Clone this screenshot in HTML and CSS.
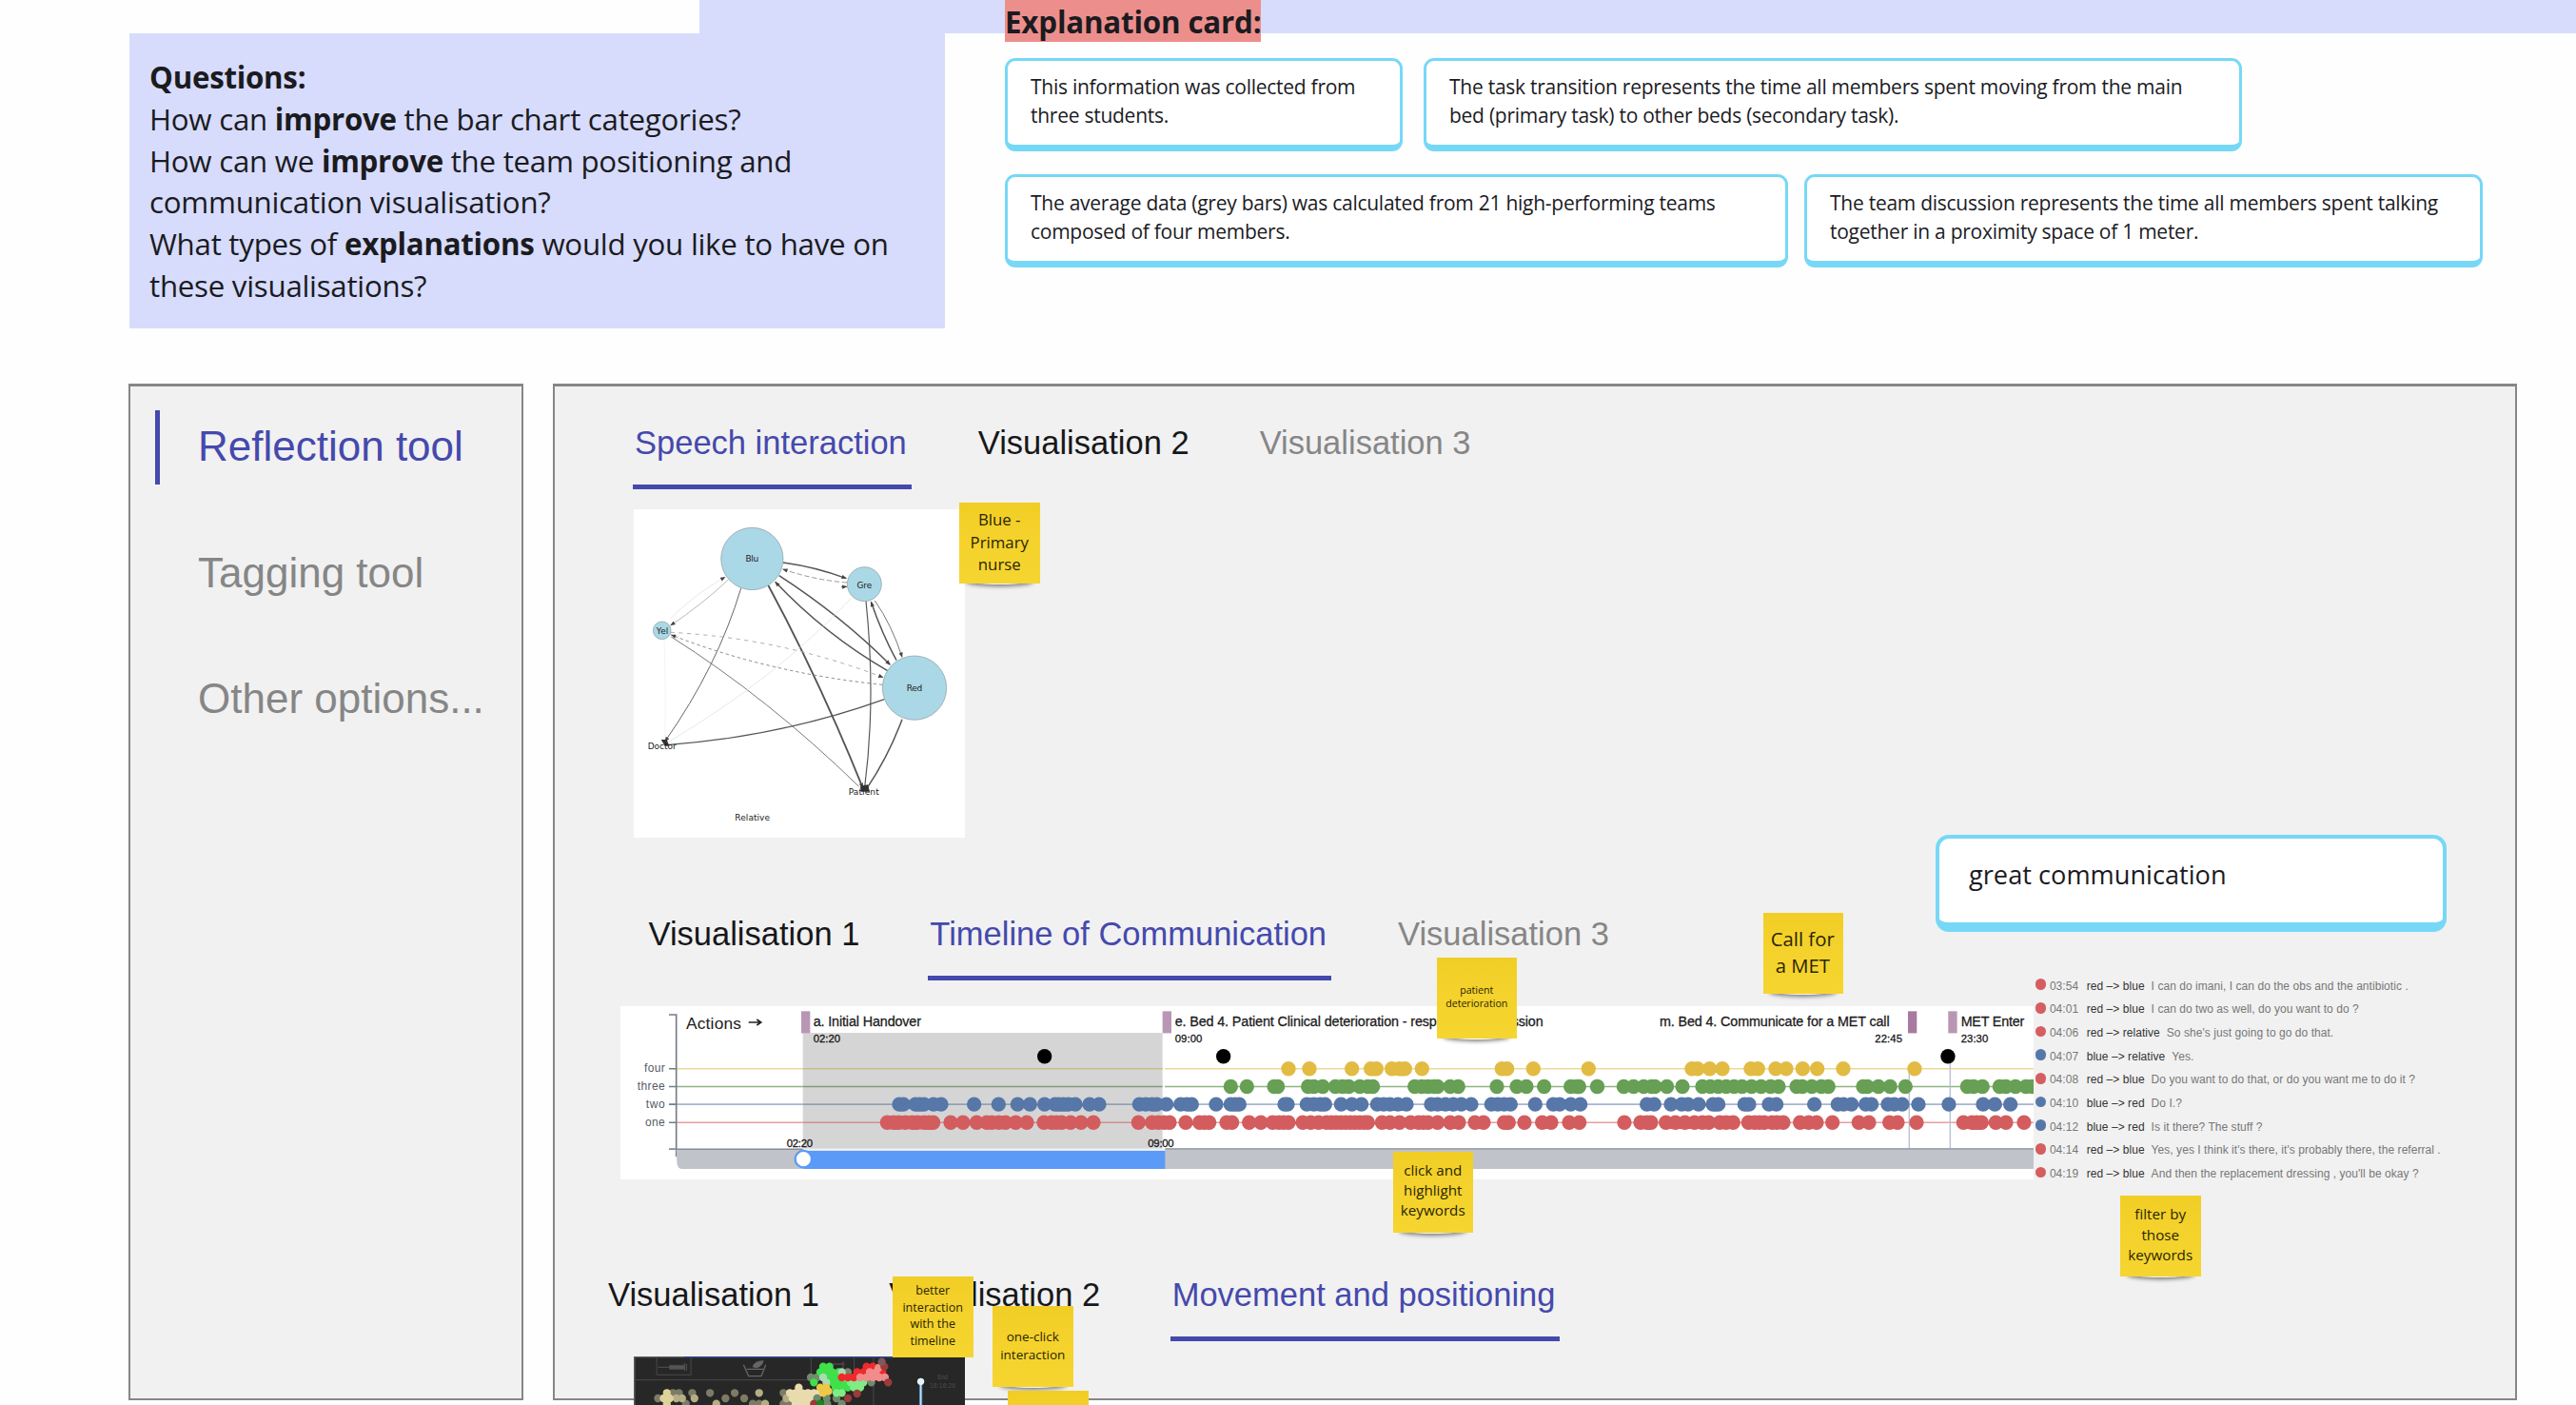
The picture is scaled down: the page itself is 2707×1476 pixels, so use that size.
FILE: index.html
```html
<!DOCTYPE html>
<html lang="en">
<head>
<meta charset="utf-8">
<title>Reflection tool board</title>
<link rel="stylesheet" href="styles.css">
</head>
<body>
<div class="board">
  <div class="banner"></div>
  <header class="top">
    <section class="questions">
      <p><b>Questions:</b></p>
      <p>How can <b>improve</b> the bar chart categories?</p>
      <p>How can we <b>improve</b> the team positioning and<br>communication visualisation?</p>
      <p>What types of <b>explanations</b> would you like to have on<br>these visualisations?</p>
    </section>
    <section class="explain">
      <h2 class="explain-title">Explanation card:</h2>
      <div class="cards">
        <div class="card card-a">This information was collected from<br>three students.</div>
        <div class="card card-b">The task transition represents the time all members spent moving from the main<br>bed (primary task) to other beds (secondary task).</div>
      </div>
      <div class="cards">
        <div class="card card-c">The average data (grey bars) was calculated from 21 high-performing teams<br>composed of four members.</div>
        <div class="card card-d">The team discussion represents the time all members spent talking<br>together in a proximity space of 1 meter.</div>
      </div>
    </section>
  </header>

  <div class="panels">
    <nav class="side">
      <a class="side-item active">Reflection tool</a>
      <a class="side-item">Tagging tool</a>
      <a class="side-item">Other options...</a>
    </nav>

    <main class="main">
      <div class="tabs tabs-1">
        <a class="tab on">Speech interaction</a><a class="tab">Visualisation 2</a><a class="tab off">Visualisation 3</a>
      </div>
      <svg class="network" viewBox="76 44 1046 1036">
        <defs>
          <marker id="arrow" viewBox="0 0 10 8" refX="9" refY="4" markerWidth="18" markerHeight="13" markerUnits="userSpaceOnUse" orient="auto"><path d="M0 0L10 4L0 8z" fill="#444"/></marker>
        </defs>
        <rect x="76" y="44" width="1046" height="1036" fill="#fff"/>
        <g fill="none" stroke="#555" stroke-width="3">
          <path d="M547 212Q650 226 746 262" stroke-width="4" marker-end="url(#arrow)"/>
          <path d="M748 275Q650 268 546 233" stroke="#999" stroke-dasharray="16 8" marker-end="url(#arrow)"/>
          <path d="M730 289L748 288" marker-end="url(#arrow)"/>
          <path d="M534 253Q730 380 884 534" stroke-width="4.5" marker-end="url(#arrow)"/>
          <path d="M876 553Q680 440 522 273" stroke-width="4.5" marker-end="url(#arrow)"/>
          <path d="M500 284Q660 580 798 922" stroke-width="5.5" marker-end="url(#arrow)"/>
          <path d="M414 293Q340 540 174 776" stroke="#666" marker-end="url(#arrow)"/>
          <path d="M192 388Q270 310 364 258" stroke="#ddd" stroke-width="2" marker-end="url(#arrow)"/>
          <path d="M374 266Q290 345 192 410" stroke="#aaa" stroke-width="2.5" marker-end="url(#arrow)"/>
          <path d="M192 432Q540 450 862 574" stroke="#aaa" stroke-dasharray="12 14" marker-end="url(#arrow)"/>
          <path d="M860 597Q500 560 194 440" stroke="#888" stroke-dasharray="10 9" marker-end="url(#arrow)"/>
          <path d="M194 446Q500 640 786 918" stroke="#777"/>
          <path d="M172 456Q178 620 174 770" stroke="#eee" stroke-width="2"/>
          <path d="M762 324Q520 580 184 778" stroke="#ddd" stroke-width="2"/>
          <path d="M866 643Q540 760 180 787" stroke-width="3.5"/>
          <path d="M836 332Q890 410 922 510" stroke="#777" marker-end="url(#arrow)"/>
          <path d="M904 520Q860 440 824 336" stroke-width="4.5" marker-end="url(#arrow)"/>
          <path d="M808 334Q840 640 804 920" stroke-width="3.5"/>
          <path d="M922 706Q880 820 812 922" stroke-width="4.5"/>
        </g>
        <path d="M162 770l18 0l8 20h-14zM790 916l24-4l6 22h-28z" fill="#333"/>
        <g fill="#abd8e6" stroke="#88979c" stroke-width="2">
          <circle cx="449" cy="200" r="98"/><circle cx="803" cy="280" r="54"/><circle cx="165" cy="426" r="28"/><circle cx="961" cy="607" r="101"/>
        </g>
        <g class="net-label">
          <text x="449" y="210" textLength="41">Blu</text>
          <text x="803" y="292" textLength="47">Gre</text>
          <text x="166" y="437" textLength="38">Yel</text>
          <text x="961" y="618" textLength="50">Red</text>
          <text x="165" y="800" textLength="90">Doctor</text>
          <text x="801" y="944" textLength="96">Patient</text>
          <text x="450" y="1024" textLength="110">Relative</text>
        </g>
      </svg>

      <div class="tabs tabs-2">
        <a class="tab">Visualisation 1</a><a class="tab on">Timeline of Communication</a><a class="tab off">Visualisation 3</a>
      </div>
      <div class="talk">
        <svg class="timeline" viewBox="0 0 4456 545" preserveAspectRatio="none">
          <rect width="4456" height="545" fill="#fff"/>
          <rect x="575" y="84" width="1134" height="365" fill="#d5d5d5"/>
          <g fill="#b997b4">
            <rect x="570" y="16" width="28" height="69"/><rect x="1709" y="16" width="28" height="69"/>
            <rect x="4059" y="16" width="28" height="69" fill="#a67b9f"/><rect x="4186" y="16" width="28" height="69"/>
          </g>
          <g stroke-width="5" fill="none">
            <path d="M176 197H575M1716 197H4456" stroke="#ecd996"/><path d="M575 197H1709" stroke="#c9be88"/>
            <path d="M176 253H575M1716 253H4456" stroke="#8fb582"/><path d="M575 253H1709" stroke="#829b79"/>
            <path d="M176 309H575M1716 309H4456" stroke="#a7b5d0"/><path d="M575 309H1709" stroke="#93a0b4"/>
            <path d="M176 366H575M1716 366H4456" stroke="#ea9d9d"/><path d="M575 366H1709" stroke="#d28f8f"/>
            <path d="M4063 200V448M4192 180V448" stroke="#b9bed2" stroke-width="4"/>
            <path d="M153 27H176V473M153 450H176M153 197H176M153 253H176M153 309H176M153 366H176" stroke="#767d88"/>
          </g>
          <path d="M176 449H4456V512H192Q178 508 178 490z" fill="#c0c3ca"/>
          <path d="M153 450H575M1717 449H4456" stroke="#878b93" stroke-width="4"/>
          <rect x="575" y="448" width="1142" height="7" fill="#eef2f8"/>
          <rect x="578" y="455" width="1139" height="57" fill="#5b9af7"/>
          <circle cx="577" cy="481" r="26" fill="#fff" stroke="#5b9af7" stroke-width="7"/>
          <g id="dots"></g>
          <g fill="#000"><circle cx="1337" cy="158" r="23"/><circle cx="1901" cy="158" r="23"/><circle cx="4185" cy="158" r="23"/></g>
          <g class="tl-axis">
            <text x="140" y="208" textLength="65">four</text><text x="140" y="264" textLength="87">three</text>
            <text x="140" y="321" textLength="60">two</text><text x="140" y="377" textLength="62">one</text>
          </g>
          <text x="207" y="71" class="tl-big" textLength="174">Actions</text>
          <path d="M404 51H442M430 42L443 51L430 60" fill="none" stroke="#222" stroke-width="5"/>
          <g class="tl-event">
            <text x="608" y="62" textLength="340">a. Initial Handover</text>
            <text x="1748" y="62" textLength="1161">e. Bed 4. Patient Clinical deterioration - respiratory depression</text>
            <text x="3276" y="62" textLength="725">m. Bed 4. Communicate for a MET call</text>
            <text x="4226" y="62" textLength="200">MET Enter</text>
          </g>
          <g class="tl-time">
            <text x="608" y="113" textLength="85">02:20</text><text x="1748" y="113" textLength="86">09:00</text>
            <text x="3955" y="113" textLength="86">22:45</text><text x="4226" y="113" textLength="86">23:30</text>
            <text x="524" y="443" textLength="82">02:20</text><text x="1663" y="443" textLength="82">09:00</text>
          </g>
        </svg>
        <div class="log">
          <div class="say red"><i></i><time>03:54</time><b>red –&gt; blue</b><span>I can do imani, I can do the obs and the antibiotic .</span></div>
          <div class="say red"><i></i><time>04:01</time><b>red –&gt; blue</b><span>I can do two as well, do you want to do ?</span></div>
          <div class="say red"><i></i><time>04:06</time><b>red –&gt; relative</b><span>So she's just going to go do that.</span></div>
          <div class="say blue"><i></i><time>04:07</time><b>blue –&gt; relative</b><span>Yes.</span></div>
          <div class="say red"><i></i><time>04:08</time><b>red –&gt; blue</b><span>Do you want to do that, or do you want me to do it ?</span></div>
          <div class="say blue"><i></i><time>04:10</time><b>blue –&gt; red</b><span>Do I.?</span></div>
          <div class="say blue"><i></i><time>04:12</time><b>blue –&gt; red</b><span>Is it there? The stuff ?</span></div>
          <div class="say red"><i></i><time>04:14</time><b>red –&gt; blue</b><span>Yes, yes I think it's there, it's probably there, the referral .</span></div>
          <div class="say red"><i></i><time>04:19</time><b>red –&gt; blue</b><span>And then the replacement dressing , you'll be okay ?</span></div>
        </div>
      </div>

      <div class="tabs tabs-3">
        <a class="tab">Visualisation 1</a><a class="tab">Visualisation 2</a><a class="tab on">Movement and positioning</a>
      </div>
      <svg class="ward" viewBox="16 26 1046 154">
        <rect x="16" y="26" width="1046" height="154" fill="#272727"/>
        <path d="M18 180V28H175" fill="none" stroke="#5c5f66" stroke-width="4"/>
        <path d="M175 28H836" stroke="#33468c" stroke-width="5"/>
        <g fill="none" stroke="#4a4a4a" stroke-width="3">
          <path d="M18 100H575M88 30V84H196V30M575 30V92M711 30V92M772 30V180M575 100H640"/>
          <path d="M92 60H128M176 46V72M182 50V70" stroke-width="4"/><path d="M128 54H176V66H128z" fill="#555"/>
          <path d="M362 52L378 88H418L432 52M372 66H424" stroke="#666" stroke-width="4"/>
          <path d="M392 60Q392 42 424 40Q420 58 400 62" fill="#666" stroke="#666"/>
          <path d="M640 50H680M676 42V66" stroke-width="4"/>
        </g>
        <g id="heat"></g>
        <path d="M921 104V180" stroke="#3f7fb0" stroke-width="10"/><path d="M921 104V180" stroke="#c4dff0" stroke-width="5"/>
        <circle cx="921" cy="105" r="11" fill="#e6f4fb"/>
        <g class="ward-label"><text x="990" y="97" textLength="32">End</text><text x="990" y="126" textLength="82">18:16:26</text></g>
      </svg>
    </main>
  </div>

  <div class="card praise">great communication</div>
  <div class="note n1">Blue -<br>Primary<br>nurse</div>
  <div class="note n2">patient<br>deterioration</div>
  <div class="note n3">Call for<br>a MET</div>
  <div class="note n4">click and<br>highlight<br>keywords</div>
  <div class="note n5">filter by<br>those<br>keywords</div>
  <div class="note n6">better<br>interaction<br>with the<br>timeline</div>
  <div class="note n7">one-click<br>interaction</div>
  <div class="note n8"></div>
</div>
<script src="script.js"></script>
</body>
</html>
```
FILE: styles.css
```css
* { box-sizing: border-box; }
body { margin: 0; background: #fff; }
p, h2 { margin: 0; font-size: inherit; }

.board {
  position: relative;
  width: 2707px;
  height: 1476px;
  overflow: hidden;
  background: #fefefe;
  font-family: "Open Sans", "Noto Sans", sans-serif;
  color: #1b1b1f;
}

.banner {
  position: absolute;
  left: 735px;
  top: 0;
  right: 0;
  height: 35px;
  background: #d7dcfc;
}

.top {
  position: relative;
  display: flex;
  align-items: flex-start;
  height: 403px;
  padding-left: 136px;
}
.questions {
  width: 857px;
  height: 310px;
  margin-top: 35px;
  padding: 25px 21px 0;
  background: #d7dcfc;
  font-size: 31.3px;
  line-height: 43.8px;
  letter-spacing: -.28px;
  white-space: nowrap;
}
.explain {
  display: flex;
  flex-direction: column;
  align-items: flex-start;
  margin-left: 63px;
}
.explain-title {
  height: 44px;
  margin-bottom: 17px;
  background: #ec8f8c;
  font-size: 31.3px;
  line-height: 47px;
  letter-spacing: -.18px;
  white-space: nowrap;
}
.cards { display: flex; margin-bottom: 24px; }
.card {
  height: 98px;
  padding: 13px 24px 0;
  border: 3px solid #76d8f6;
  border-bottom-width: 7px;
  border-radius: 11px;
  background: #fff;
  font-size: 21px;
  line-height: 29.8px;
  letter-spacing: -.26px;
  white-space: nowrap;
}
.card-a { width: 418px; margin-right: 22px; }
.card-b { width: 860px; }
.card-c { width: 823px; margin-right: 17px; }
.card-d { width: 713px; }

.panels {
  display: flex;
  gap: 31px;
  padding-left: 135px;
  height: 1068px;
}
.side, .main {
  border: 2px solid #868686;
  border-top-width: 3px;
  background: #f1f1f1;
  font-family: "Liberation Sans", Arial, sans-serif;
}
.side {
  display: flex;
  flex-direction: column;
  gap: 54.6px;
  width: 415px;
  padding: 25px 26px;
}
.side-item {
  height: 78px;
  padding-left: 40px;
  border-left: 5px solid transparent;
  font-size: 44px;
  line-height: 75px;
  white-space: nowrap;
  color: #868686;
}
.side-item.active { color: #4549ad; border-color: #4549ad; }

.main { width: 2064px; }
.tabs {
  display: flex;
  height: 69px;
  font-size: 34.5px;
  line-height: 41px;
  white-space: nowrap;
}
.tab { display: block; color: #17171a; }
.tab.on { color: #4549ad; border-bottom: 5px solid #4549ad; padding: 0 5px 0 2px; }
.tab.off { color: #868686; }
.tabs-1 { margin: 39px 0 0 82px; gap: 70px; }
.tabs-1 .off { margin-left: 4px; }
.tabs-2 { margin: 81px 0 0 98.5px; gap: 72px; }
.tabs-2 .off { margin-left: -2px; }
.tabs-3 { margin: 101px 0 0 56px; gap: 73.5px; }

.network {
  display: block;
  width: 348.7px;
  height: 345.3px;
  margin: 21px 0 0 82.5px;
}
.net-label {
  font: 27px "DejaVu Sans", sans-serif;
  text-anchor: middle;
  fill: #222;
}

.talk {
  display: flex;
  align-items: flex-start;
  height: 182px;
  margin: 27px 0 0 68.5px;
}
.timeline { display: block; width: 1485.3px; height: 182px; }
.tl-axis { font-size: 36px; text-anchor: end; fill: #555b66; }
.tl-big { font-size: 52px; fill: #222; }
.tl-event { font-size: 43px; fill: #1a1a1a; stroke: #1a1a1a; stroke-width: .8; }
.tl-time { font-size: 34px; fill: #111; stroke: #111; stroke-width: .8; }
.row { fill: none; stroke-width: 46; stroke-linecap: round; }
.heat { fill: none; stroke-width: 25; stroke-linecap: round; }

.log {
  display: flex;
  flex-direction: column;
  margin: -34px 0 0 2px;
}
.say {
  display: flex;
  align-items: center;
  height: 24.7px;
  font-size: 12px;
  line-height: 24px;
  letter-spacing: .05px;
  white-space: nowrap;
  color: #777;
}
.say i { width: 11.6px; height: 11.6px; border-radius: 50%; margin: -3px 3.5px 0 0; background: #d45e60; }
.say.blue i { background: #5678a8; }
.say time { margin-right: 8.5px; }
.say b { margin-right: 7px; font-weight: normal; color: #333; }

.ward {
  display: block;
  width: 348.7px;
  height: 51.3px;
  margin: 15.5px 0 0 82.5px;
}
.ward-label { font-size: 20px; text-anchor: middle; fill: #4c4c4c; }

.praise {
  position: absolute;
  left: 2034px;
  top: 877px;
  width: 537px;
  height: 102px;
  padding: 13px 31px;
  border-width: 4px;
  border-bottom-width: 10px;
  border-radius: 14px;
  font-size: 27.2px;
  line-height: 50px;
  letter-spacing: 0;
}

/* Sticky notes: ::before is the paper, ::after the curl shadow under it */
.note {
  position: absolute;
  z-index: 0;
  display: flex;
  align-items: center;
  justify-content: center;
  width: 84.5px;
  height: 85px;
  padding-bottom: 2.5px;
  text-align: center;
  white-space: nowrap;
  color: #2a2505;
}
.note::before {
  content: "";
  position: absolute;
  z-index: -1;
  inset: 0;
  background: linear-gradient(#f0ce25, #f4d12a 30%, #f6d530);
}
.note::after {
  content: "";
  position: absolute;
  z-index: -2;
  left: 9%;
  right: 9%;
  bottom: -1px;
  height: 8px;
  border-radius: 50%;
  box-shadow: 0 1px 4px 1px rgba(0, 0, 0, .5);
}
.n1 { left: 1008px; top: 528px; font-size: 16.8px; line-height: 23.5px; }
.n2 { left: 1509.5px; top: 1006px; font-size: 10.6px; line-height: 14.2px; }
.n3 { left: 1852.5px; top: 959px; font-size: 20.3px; line-height: 28px; padding-right: 1px; }
.n4 { left: 1463.5px; top: 1209.5px; font-size: 15.2px; line-height: 21.3px; }
.n5 { left: 2228px; top: 1256px; font-size: 15.2px; line-height: 21.3px; }
.n6 { left: 938px; top: 1341px; font-size: 12.6px; line-height: 17.7px; }
.n6::after { display: none; }
.n7 { left: 1043px; top: 1372px; font-size: 13.5px; line-height: 19px; padding-bottom: 1px; }
.n8 { left: 1059px; top: 1461px; }
```
FILE: script.js
```js
// Utterances per speaker, grouped by timeline segment: [segment offset, positions]
const speakers = [
  { y: 197, color: '#e2bb42', marks: [
    [1586, [520,586,720,780,797,846,870,887,941,1193,1209,1292,1466]],
    [3086, [292,310,348,388,478,500,556,589,641,687,769,994]]] },
  { y: 253, color: '#679f55', marks: [
    [1586, [338,389,475,486,582,600,628,668,690,710,745,770,786,918,940,960,980,990,1030,1055,1177,1240,1270,1326,1410,1430,1436,1494]],
    [3086, [-7,77,108,140,165,175,213,262,325,350,375,400,425,450,480,510,540,565,622,640,670,700,722,832,845,880,917,965,1160,1180,1208,1262,1282,1312,1345,1365]]] },
  { y: 309, color: '#5677a8', marks: [
    [0, [879,892,930,943,957,987,1011,1115,1192,1252,1291,1337,1370,1382,1396,1412,1434,1479,1509]],
    [1586, [50,70,90,105,135,180,200,215,292,338,352,365,508,517,578,600,620,635,686,720,750,800,820,840,865,892,970,990,1015,1040,1065,1096,1160,1180,1200,1220,1298,1355,1375,1410,1440]],
    [3086, [150,173,226,260,280,313,358,375,458,472,535,558,678,752,770,795,840,858,910,930,955,1006,1102,1210,1247,1296]]] },
  { y: 366, color: '#d35d5e', marks: [
    [0, [841,861,877,898,920,936,957,973,986,1041,1080,1123,1155,1171,1193,1214,1246,1281,1335,1359,1375,1391,1419,1452,1491]],
    [1586, [47,90,110,128,145,196,240,255,270,325,342,396,433,470,490,505,520,565,590,615,640,655,670,685,700,715,730,745,760,770,815,840,870,905,930,945,960,990,1030,1057,1108,1135,1200,1214,1264,1320,1348,1405,1437]],
    [3086, [79,130,150,163,210,240,270,300,325,345,380,400,422,470,490,505,520,545,560,580,633,660,685,735,818,850,915,940,1000,1148,1175,1190,1205,1250,1282,1339]]] }
];

const NS = 'http://www.w3.org/2000/svg';
function dots(parent, cls, color, points) {
  const p = document.createElementNS(NS, 'path');
  p.setAttribute('class', cls);
  p.setAttribute('stroke', color);
  p.setAttribute('d', points.map(([x, y]) => `M${x} ${y}h0`).join(''));
  document.getElementById(parent).append(p);
}

for (const s of speakers) {
  dots('dots', 'row', s.color, s.marks.flatMap(([off, xs]) => xs.map(x => [x + off, s.y])));
}

// Position samples per nurse on the ward map
dots('heat', 'heat', '#7d7b66', [[92,158],[139,141],[158,141],[200,141],[256,141],[334,141],[305,158],[364,158],[180,175],[488,141],[391,175],[411,175],[488,175],[507,175]]);
dots('heat', 'heat', '#b5ae84', [[207,158],[411,141],[276,175],[430,175],[168,158],[150,158],[497,158]]);
dots('heat', 'heat', '#ddd29a', [[120,141],[110,158],[129,158],[120,175]]);
dots('heat', 'heat', '#e8dcae', [[508,141],[526,141],[536,124],[546,141],[565,141],[584,141],[516,158],[536,158],[555,158],[574,158],[526,175],[546,175],[565,175],[600,141]]);
dots('heat', 'heat', '#6f8a6c', [[574,92],[594,92],[691,75],[594,158],[624,158],[655,158],[626,175],[672,175],[765,108],[755,92]]);
dots('heat', 'heat', '#3fe04a', [[613,58],[633,58],[604,75],[623,75],[642,75],[584,108],[662,75],[652,92],[633,92],[642,108],[662,108],[681,108],[652,124],[672,124],[691,124]]);
dots('heat', 'heat', '#7fec86', [[700,108],[720,108],[740,108],[710,124],[730,124],[681,92],[672,141],[655,141]]);
dots('heat', 'heat', '#a9dcae', [[613,92],[623,108],[672,75]]);
dots('heat', 'heat', '#ecc846', [[604,124],[623,124],[613,141],[630,136]]);
dots('heat', 'heat', '#f02a2c', [[672,92],[691,92],[710,92],[720,75],[750,58],[770,58],[740,75],[800,75]]);
dots('heat', 'heat', '#f08c8c', [[730,92],[750,92],[770,92],[790,92],[808,92],[760,75],[780,75],[788,62]]);
dots('heat', 'heat', '#9c3b3a', [[818,108],[691,158],[720,143],[584,175],[806,58]]);
dots('heat', 'heat', '#7c5a58', [[798,43]]);
dots('heat', 'heat', '#148a1a', [[604,175]]);
```
